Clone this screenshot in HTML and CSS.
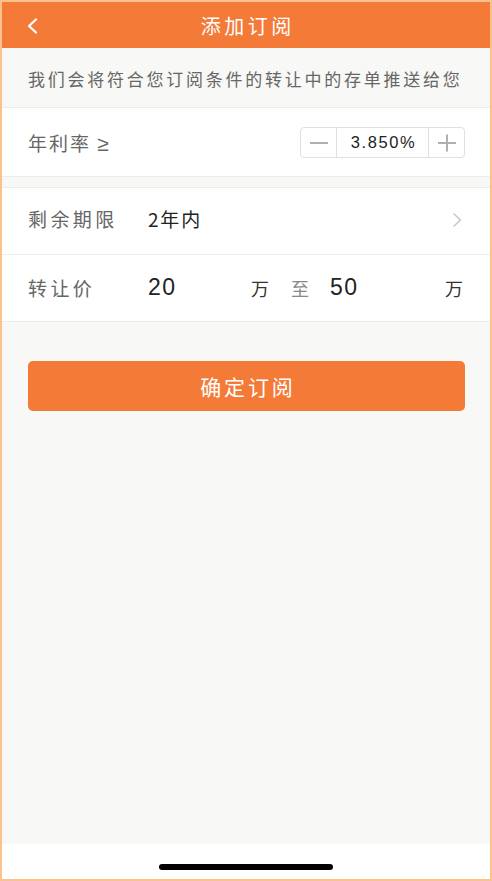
FILE: index.html
```html
<!DOCTYPE html>
<html lang="zh-CN">
<head>
<meta charset="utf-8">
<title>添加订阅</title>
<link rel="stylesheet" href="styles.css">
</head>
<body>
<div class="frame">
  <header class="topbar">
    <div class="back">
      <svg width="14" height="16" viewBox="0 0 14 16"><polyline points="10,1.5 3,8 10,14.5" fill="none" stroke="#fff" stroke-width="2.2" stroke-linecap="round" stroke-linejoin="round"/></svg>
    </div>
    <div class="title">添加订阅</div>
    <div></div>
  </header>
  <div class="notice">我们会将符合您订阅条件的转让中的存单推送给您</div>
  <div class="row rate-row">
    <div class="label">年利率 <span class="ge">≥</span></div>
    <div class="stepper">
      <div class="step-btn">
        <svg width="20" height="20" viewBox="0 0 20 20"><line x1="1" y1="10" x2="19" y2="10" stroke="#b0b0b0" stroke-width="2"/></svg>
      </div>
      <div class="step-value">3.850%</div>
      <div class="step-btn">
        <svg width="20" height="20" viewBox="0 0 20 20"><line x1="1" y1="10" x2="19" y2="10" stroke="#b0b0b0" stroke-width="2"/><line x1="10" y1="1.5" x2="10" y2="18.5" stroke="#b0b0b0" stroke-width="2"/></svg>
      </div>
    </div>
  </div>
  <div class="spacer"></div>
  <div class="row term-row">
    <div class="label wide">剩余期限</div>
    <div class="value">2年内</div>
    <svg class="arrow" width="10" height="16" viewBox="0 0 10 16"><polyline points="1.5,1.5 8.5,8 1.5,14.5" fill="none" stroke="#c4c4c4" stroke-width="1.4"/></svg>
  </div>
  <div class="row price-row">
    <div class="label wide">转让价</div>
    <div class="num first">20</div>
    <div class="unit">万</div>
    <div class="to">至</div>
    <div class="num second">50</div>
    <div class="unit">万</div>
  </div>
  <main class="content">
    <button class="confirm">确定订阅</button>
  </main>
  <footer class="home-bar"><span class="indicator"></span></footer>
</div>
</body>
</html>
```

FILE: styles.css
```css
* { box-sizing: border-box; margin: 0; padding: 0; }
html, body { width: 492px; height: 881px; }
body {
  font-family: "Noto Sans CJK SC", "Liberation Sans", sans-serif;
  background: #fff;
}
.frame {
  width: 492px;
  height: 881px;
  border: 2px solid #fcc28e;
  display: flex;
  flex-direction: column;
  background: #f8f8f6;
}
.topbar {
  height: 46px;
  flex: none;
  background: #f47a38;
  display: grid;
  grid-template-columns: 1fr auto 1fr;
  align-items: center;
}
.back { padding-left: 24px; display: flex; align-items: center; padding-top: 1px; }
.title {
  color: #fff;
  font-size: 20px;
  letter-spacing: 3.5px;
  padding-left: 3.5px;
  line-height: 1;
  padding-top: 1px;
}
.notice {
  height: 60px;
  flex: none;
  display: flex;
  align-items: center;
  padding-left: 26px;
  font-size: 17px;
  letter-spacing: 2.75px;
  color: #666;
  border-bottom: 1px solid #ececec;
  white-space: nowrap;
  padding-top: 1px;
}
.row {
  flex: none;
  background: #fff;
  display: flex;
  align-items: center;
  padding-left: 26px;
  padding-right: 26px;
}
.rate-row { height: 68px; padding-right: 25px; justify-content: space-between; }
.label {
  font-size: 19px;
  color: #666;
  letter-spacing: 2px;
  white-space: nowrap;
}
.ge { font-family: "Liberation Sans", sans-serif; font-size: 21px; }
.label.wide { width: 120px; letter-spacing: 3.4px; flex: none; }
.stepper {
  display: flex;
  height: 31px;
  border: 1px solid #e0e0e0;
  border-radius: 4px;
  margin-top: 1px;
}
.step-btn {
  width: 35px;
  display: flex;
  align-items: center;
  justify-content: center;
}
.step-value {
  width: 93px;
  border-left: 1px solid #e0e0e0;
  border-right: 1px solid #e0e0e0;
  display: flex;
  align-items: center;
  justify-content: center;
  font-family: "Liberation Sans", sans-serif;
  font-size: 16.5px;
  letter-spacing: 1.6px;
  padding-left: 2px;
  color: #222;
}
.spacer {
  height: 12px;
  flex: none;
  background: #f8f8f6;
  border-top: 1px solid #ececec;
  border-bottom: 1px solid #ececec;
}
.term-row { height: 67px; border-bottom: 1px solid #ececec; padding-bottom: 5px; }
.value {
  flex: 1;
  font-size: 19px;
  color: #222;
  letter-spacing: 1.8px;
}
.arrow { flex: none; margin-right: 2px; margin-top: 3px; }
.price-row { height: 67px; border-bottom: 1px solid #ececec; padding-right: 27px; padding-bottom: 1px; }
.num {
  font-family: "Liberation Sans", sans-serif;
  font-size: 23px;
  letter-spacing: 1.5px;
  color: #222;
}
.num.first { width: 103px; flex: none; }
.num.second { flex: 1; }
.unit { font-size: 18px; color: #333; letter-spacing: 0; }
.to { font-size: 18px; color: #888; margin: 0 21px 0 22px; }
.content {
  flex: 1;
  padding: 39px 25px 0 26px;
  background: #f8f8f6;
}
.confirm {
  display: block;
  width: 100%;
  height: 50px;
  border: none;
  border-radius: 5px;
  background: #f47a38;
  color: #fff;
  font-family: "Noto Sans CJK SC", sans-serif;
  font-size: 21px;
  letter-spacing: 2.8px;
  padding-left: 2.8px;
}
.home-bar {
  height: 35px;
  flex: none;
  background: #fff;
  display: flex;
  justify-content: center;
  padding-top: 20px;
}
.indicator {
  display: block;
  width: 174px;
  height: 6px;
  border-radius: 3px;
  background: #000;
}
```
